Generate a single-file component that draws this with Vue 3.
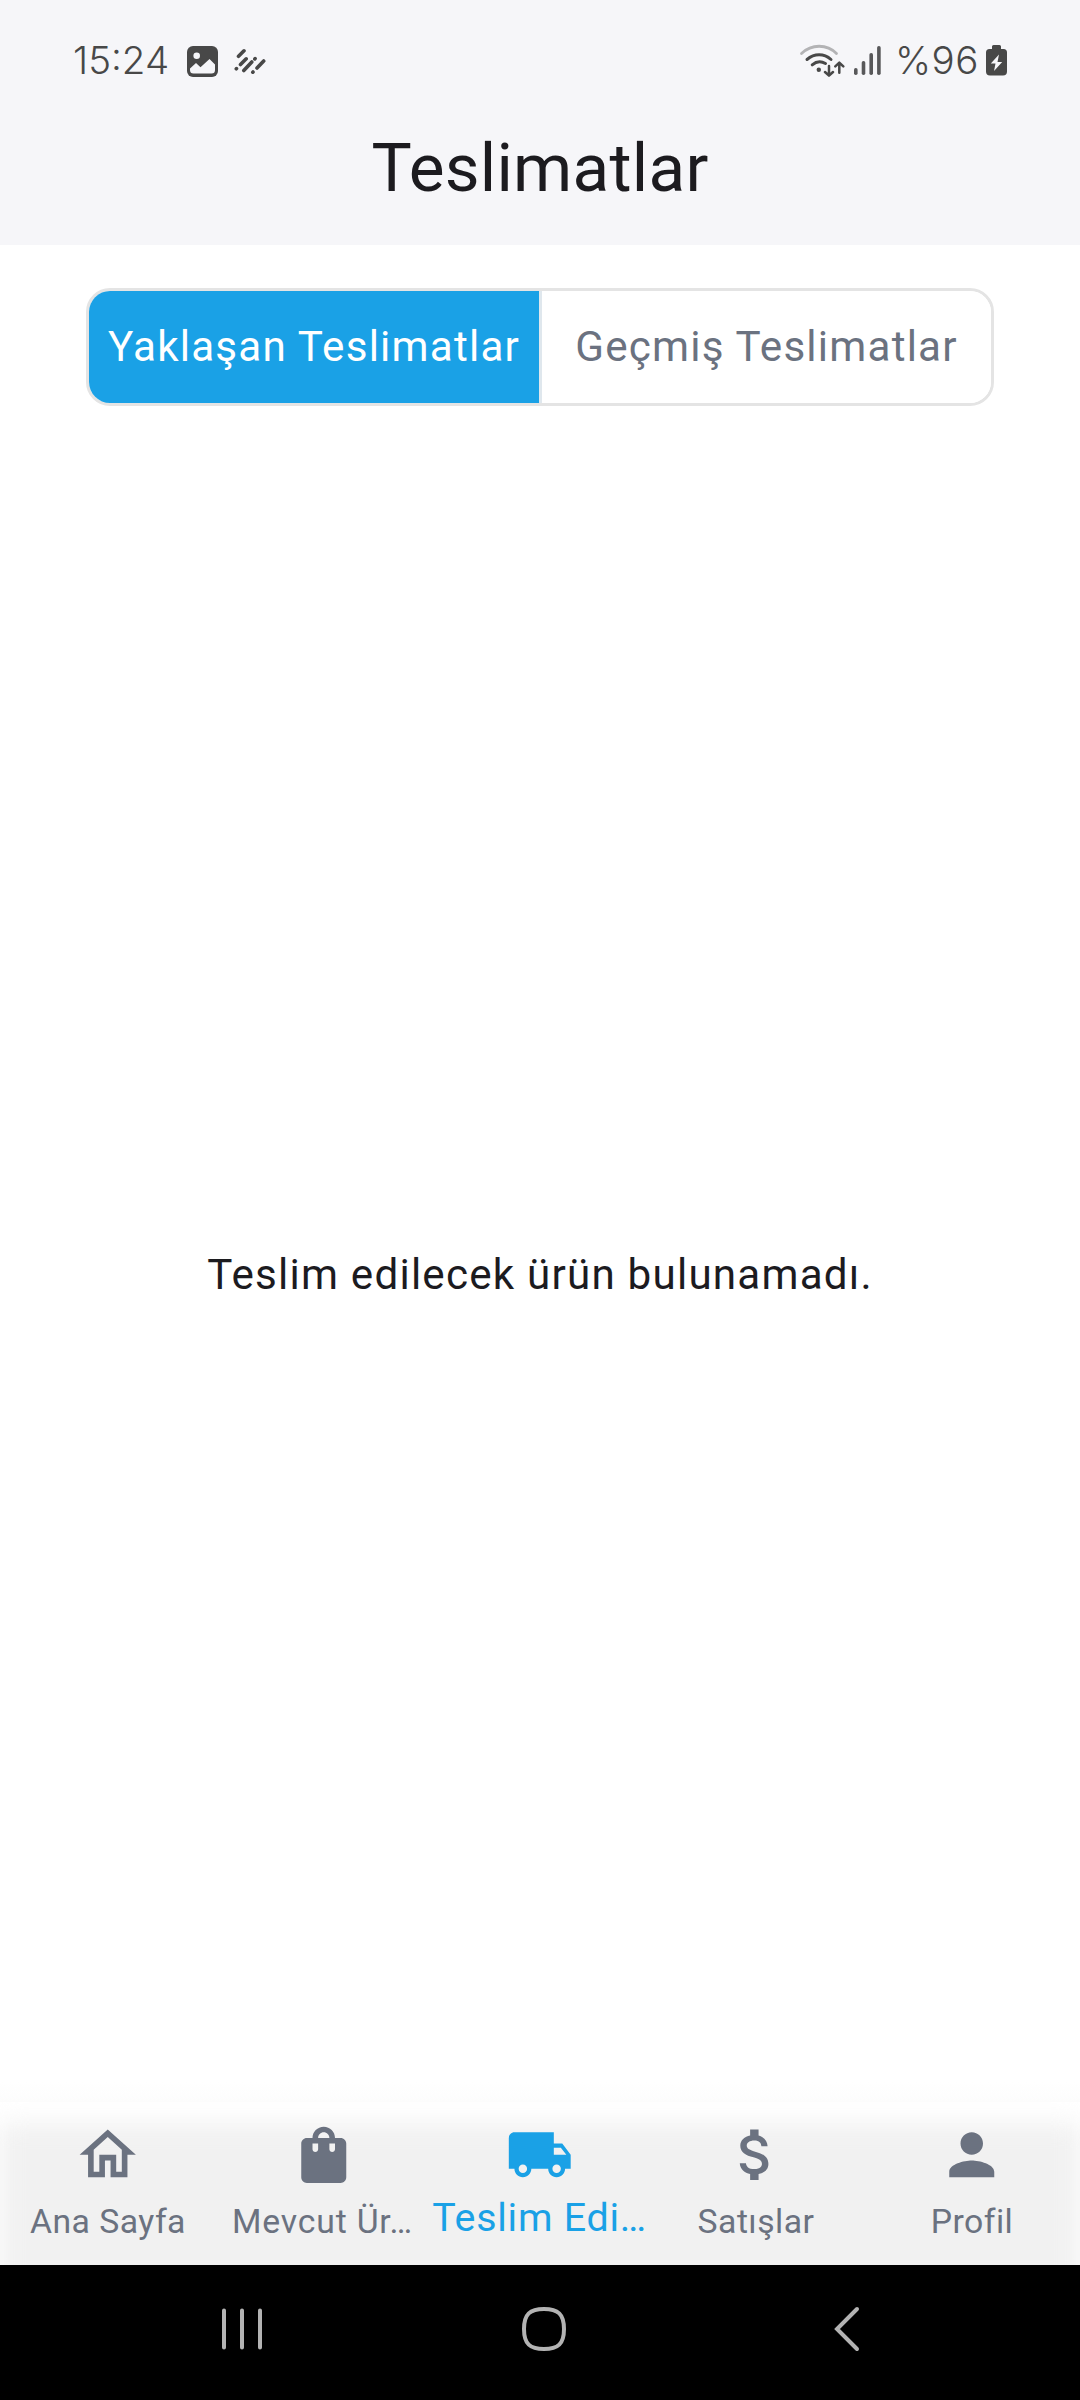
<script setup>
const tabs = [
  { label: 'Yaklaşan Teslimatlar', active: true },
  { label: 'Geçmiş Teslimatlar', active: false },
]

const navItems = [
  { label: 'Ana Sayfa', path: 'M12 5.69l5 4.5V18h-2v-6H9v6H7v-7.81l5-4.5M12 3L2 12h3v8h6v-6h2v6h6v-8h3L12 3z' },
  { label: 'Mevcut Ür…', clipped: true, path: 'M18 6h-2c0-2.21-1.79-4-4-4S8 3.79 8 6H6c-1.1 0-2 .9-2 2v12c0 1.1.9 2 2 2h12c1.1 0 2-.9 2-2V8c0-1.1-.9-2-2-2zm-8 4c0 .55-.45 1-1 1s-1-.45-1-1V8h2v2zm2-6c1.1 0 2 .9 2 2h-4c0-1.1.9-2 2-2zm4 6c0 .55-.45 1-1 1s-1-.45-1-1V8h2v2z' },
  { label: 'Teslim Edi…', active: true, path: 'M20 8h-3V4H3c-1.1 0-2 .9-2 2v11h2c0 1.66 1.34 3 3 3s3-1.34 3-3h6c0 1.66 1.34 3 3 3s3-1.34 3-3h2v-5l-3-4zM6 18.5c-.83 0-1.5-.67-1.5-1.5s.67-1.5 1.5-1.5 1.5.67 1.5 1.5-.67 1.5-1.5 1.5zm13.5-9l1.96 2.5H17V9.5h2.5zm-1.5 9c-.83 0-1.5-.67-1.5-1.5s.67-1.5 1.5-1.5 1.5.67 1.5 1.5-.67 1.5-1.5 1.5z' },
  { label: 'Satışlar', path: 'M11.8 10.9c-2.27-.59-3-1.2-3-2.15 0-1.09 1.01-1.85 2.7-1.85 1.78 0 2.44.85 2.5 2.1h2.21c-.07-1.72-1.12-3.3-3.21-3.81V3h-3v2.16c-1.94.42-3.5 1.68-3.5 3.61 0 2.31 1.91 3.46 4.7 4.13 2.5.6 3 1.48 3 2.41 0 .69-.49 1.79-2.7 1.79-2.06 0-2.87-.92-2.98-2.1h-2.2c.12 2.19 1.76 3.42 3.68 3.83V21h3v-2.15c1.95-.37 3.5-1.5 3.5-3.55 0-2.84-2.43-3.81-4.7-4.4z' },
  { label: 'Profil', path: 'M12 12c2.21 0 4-1.79 4-4s-1.79-4-4-4-4 1.79-4 4 1.79 4 4 4zm0 2c-2.67 0-8 1.34-8 4v2h16v-2c0-2.66-5.33-4-8-4z' },
]
</script>

<template>
  <div class="screen">
    <header class="header">
      <div class="status">
        <span class="clock">15:24</span>
        <svg class="photo" width="31" height="31" viewBox="0 0 31 31">
          <rect width="31" height="31" rx="6" fill="#484848" />
          <circle cx="9.7" cy="9.7" r="3.3" fill="#f6f6f9" />
          <path d="M3 22.5L9 17l4.500 4.200L22.500 13 28 18.500V24a3.500 3.500 0 0 1-3.500 3.500h-18A3.500 3.500 0 0 1 3 24z" fill="#f6f6f9" />
        </svg>
        <svg class="dashes" width="32" height="27" viewBox="0 0 32 27" fill="none" stroke="#484848" stroke-width="3.600" stroke-linecap="round">
          <path d="M4.500 8.300L10 2.800M2.300 20.800l.2-.2M6.500 16.500l5.700-5.700M9.800 22.500l8-8.500M20.800 10.900l.3-.3M18.800 24.200l.2-.2M23 20l6.700-7" />
        </svg>
        <span class="spacer"></span>
        <svg class="wifi" width="46" height="34" viewBox="0 0 46 34" fill="none" stroke="#484848" stroke-width="3" stroke-linecap="round">
          <path d="M2.500 9.500C12.500-.2 28-.2 37.500 9.500" stroke="#b3b3b5" stroke-width="2.800" />
          <path d="M8 15.500c7.400-6.300 16.900-6.300 24 0M13.200 20.800c4.300-3.700 9.300-3.700 13.300-1.300" />
          <circle cx="19.800" cy="25.800" r="2.200" fill="#484848" stroke="none" />
          <path d="M30 22v9M26 28l4 3.700 4-3.700M40.300 28.800v-9M36.300 22.300l4-3.700 4 3.700" stroke-width="2.500" stroke-linejoin="round" />
        </svg>
        <svg class="signal" width="28" height="29" viewBox="0 0 28 29" fill="#58585a">
          <rect x="0" y="22" width="3.600" height="7" rx="1.700" />
          <rect x="7.700" y="15" width="3.600" height="14" rx="1.700" />
          <rect x="15.400" y="7" width="3.600" height="22" rx="1.700" />
          <rect x="23.100" y="0" width="3.600" height="29" rx="1.700" />
        </svg>
        <span class="percent">%96</span>
        <svg class="battery" width="21" height="31" viewBox="0 0 21 31">
          <path d="M6 4V1.500A1.500 1.500 0 0 1 7.500 0h6A1.500 1.500 0 0 1 15 1.500V4h2.500A3.500 3.500 0 0 1 21 7.500v19a4 4 0 0 1-4 4H4a4 4 0 0 1-4-4v-19A3.500 3.500 0 0 1 3.500 4z" fill="#484848" />
          <path d="M13 9.500L4.800 18.500h4.700L8 26l8.200-9h-4.700z" fill="#f6f6f9" />
        </svg>
      </div>
      <h1 class="title">Teslimatlar</h1>
    </header>

    <div class="tabs">
      <button v-for="t in tabs" :key="t.label" class="tab" :class="{ active: t.active }">{{ t.label }}</button>
    </div>

    <main class="content">
      <p class="empty">Teslim edilecek ürün bulunamadı.</p>
    </main>

    <nav class="bottom">
      <a v-for="n in navItems" :key="n.label" class="item" :class="{ active: n.active, clipped: n.clipped }">
        <svg class="icon" viewBox="0 0 24 24"><path :d="n.path" fill="currentColor" /></svg>
        <span class="label">{{ n.label }}</span>
      </a>
    </nav>

    <footer class="system">
      <svg width="40" height="46" viewBox="0 0 40 46" stroke="#b3b3b3" stroke-width="4" stroke-linecap="round"><path d="M2 4.500v37M20 4.500v37M38 4.500v37" /></svg>
      <svg class="home" width="44" height="46" viewBox="0 0 44 46" fill="none" stroke="#b3b3b3" stroke-width="4"><path d="M22 3C36 3 42 8 42 23s-6 20-20 20S2 38 2 23 8 3 22 3z" /></svg>
      <svg class="back" width="26" height="46" viewBox="0 0 26 46" fill="none" stroke="#b3b3b3" stroke-width="4" stroke-linecap="round"><path d="M23 3L3 23l20 20" /></svg>
    </footer>
  </div>
</template>

<style>
body { background: #fff; }
</style>

<style scoped>
.screen {
  width: 1080px;
  height: 2400px;
  display: flex;
  flex-direction: column;
  overflow: hidden;
  background: #fff;
  font-family: Roboto, sans-serif;
}
.header {
  height: 245px;
  flex: none;
  background: #f6f6f9;
}
.status {
  height: 90px;
  padding: 0 73px 0 73px;
  display: flex;
  align-items: flex-start;
  box-sizing: border-box;
  color: #484848;
}
.status svg { flex: none; }
.clock, .percent {
  flex: none;
  font-family: Inter, sans-serif;
  font-weight: 350;
  font-size: 38.5px;
  line-height: 46px;
  margin-top: 37px;
  white-space: nowrap;
}
.clock { width: 97px; }
.photo { margin: 46px 0 0 17px; }
.dashes { margin: 48px 0 0 16px; }
.spacer { flex: 1; }
.wifi { margin: 44px 9px 0 0; }
.signal { margin: 46px 13px 0 0; }
.percent { width: 91px; letter-spacing: 0.5px; }
.battery { margin-top: 45px; }
.title {
  margin: 38px 0 0;
  text-align: center;
  font-size: 67.5px;
  font-weight: 400;
  line-height: 80px;
  letter-spacing: 0.25px;
  color: #1c1b1f;
}
.tabs {
  flex: none;
  width: 908px;
  height: 118px;
  margin: 43px auto 0;
  box-sizing: border-box;
  display: flex;
  border: 3px solid #e4e4e4;
  border-radius: 24px;
  overflow: hidden;
}
.tab {
  flex: 1;
  padding: 0;
  border: 0;
  background: #fff;
  color: #6b7280;
  font: 400 42.19px/50px Roboto, sans-serif;
  letter-spacing: 1.2px;
  white-space: nowrap;
}
.tab.active {
  flex: 0 0 453px;
  border-right: 3px solid #dfe7ed;
  background: #1aa1e6;
  color: #fff;
}
.content {
  flex: 1;
  display: flex;
  align-items: center;
  justify-content: center;
  padding-top: 41px;
  background: linear-gradient(#fff, #fcfcfc) bottom / 100% 20px no-repeat;
}
.empty {
  margin: 0;
  font-size: 42.19px;
  line-height: 60px;
  letter-spacing: 1.2px;
  color: #1c1b1f;
}
.bottom {
  position: relative;
  flex: none;
  height: 163px;
  display: flex;
  box-sizing: border-box;
  padding-top: 19px;
  overflow: hidden;
  background: #fff;
}
/* soft-edged grey plate behind the items */
.bottom::before {
  content: '';
  position: absolute;
  inset: 21px 0 -22px;
  background: #f1f1f1;
  filter: blur(12px);
}
.item {
  position: relative;
  flex: 1;
  min-width: 0;
  display: flex;
  flex-direction: column;
  align-items: center;
  color: #6b7280;
}
.icon { width: 67.5px; height: 67.5px; flex: none; }
.label {
  font-size: 33.75px;
  line-height: 40px;
  margin-top: 13px;
  letter-spacing: 0.45px;
  white-space: nowrap;
}
.item.clipped .label { letter-spacing: 0.8px; margin-right: 3px; }
.item.active { color: #1aa1e6; }
.item.active .label {
  font-size: 39.38px;
  line-height: 46px;
  margin-top: 6px;
  margin-right: 1px;
  letter-spacing: 0.75px;
}
.system {
  flex: none;
  height: 135px;
  display: flex;
  align-items: center;
  padding: 0 0 7px 222px;
  box-sizing: border-box;
  background: #000;
}
.home { margin-left: 260px; }
.back { margin-left: 268px; }
</style>
